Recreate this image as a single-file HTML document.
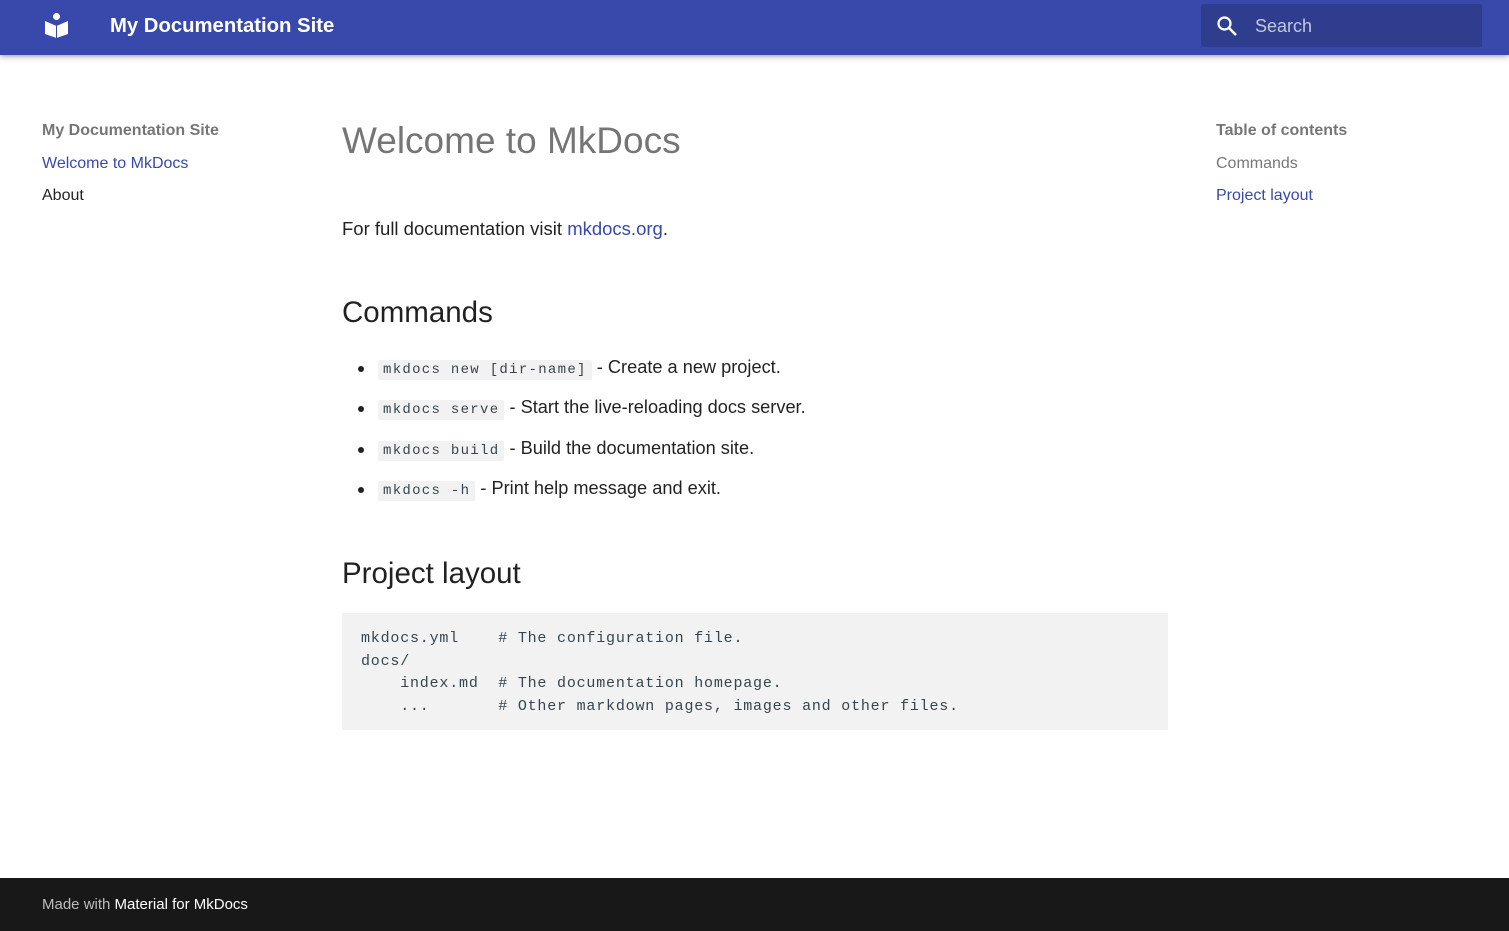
<!DOCTYPE html>
<html><head><meta charset="utf-8"><style>
*{margin:0;padding:0;box-sizing:border-box}
body{width:1509px;height:931px;position:relative;font-family:"Liberation Sans",sans-serif;color:#000000de;background:#fff;overflow:hidden}
.hdr{position:absolute;left:0;top:0;width:1509px;height:55px;background:#3949ab;box-shadow:0 0 4px rgba(0,0,0,.2),0 2px 6px rgba(0,0,0,.25)}
.title{position:absolute;left:110px;top:15px;color:#fff;font-weight:bold;font-size:20.3px}
.search{position:absolute;left:1201px;top:4px;width:281px;height:43px;background:#2f3d8f;border-radius:2px}
.search span{position:absolute;left:54px;top:12px;color:#ffffffb3;font-size:18px}
.nav{position:absolute;font-size:16px}
.code{font-family:"Liberation Mono",monospace;font-size:14px;letter-spacing:1.3px;background:#f2f2f2;padding:2px 5px;color:#36464e;border-radius:2px}
a{color:#3949ab;text-decoration:none}
ul{position:absolute;left:358px;top:357px;list-style:none}
li{height:40.3px;font-size:18.2px;position:relative;padding-left:20px}
li:before{content:"";position:absolute;left:0;top:9px;width:6px;height:6px;border-radius:50%;background:#222}
pre{position:absolute;left:342px;top:613px;width:826px;height:117px;background:#f2f2f2;padding:15px 19px;font-family:"Liberation Mono",monospace;font-size:15px;letter-spacing:0.8px;line-height:22.7px;color:#36464e}
.foot{position:absolute;left:0;top:878px;width:1509px;height:53px;background:#181818;color:#ffffffb3;font-size:15px;padding:18px 42px}
</style></head><body>
<div class="hdr">
<svg style="position:absolute;left:44px;top:12px" width="25" height="26" viewBox="0 0 25 26"><circle cx="12.5" cy="4.5" r="3.5" fill="#fff"/><path d="M1 9 L12.5 14 L24 9 V22 L12.5 26 L1 22Z" fill="#fff"/><path d="M12.5 14 V26" stroke="#3949ab" stroke-width="1"/></svg>
<div class="title">My Documentation Site</div>
<div class="search"><svg style="position:absolute;left:14px;top:10px" width="24" height="24" viewBox="0 0 24 24"><circle cx="9.5" cy="9.5" r="6" fill="none" stroke="#fff" stroke-width="2.2"/><path d="M14 14 L21 21" stroke="#fff" stroke-width="2.6"/></svg><span>Search</span></div>
</div>
<div class="nav" style="left:42px;top:122px;font-weight:bold;color:#0000008a">My Documentation Site</div>
<div class="nav" style="left:42px;top:155px"><a>Welcome to MkDocs</a></div>
<div class="nav" style="left:42px;top:187px">About</div>
<div class="nav" style="left:1216px;top:122px;font-weight:bold;color:#0000008a">Table of contents</div>
<div class="nav" style="left:1216px;top:155px;color:#0000008a">Commands</div>
<div class="nav" style="left:1216px;top:187px"><a>Project layout</a></div>
<div style="position:absolute;left:342px;top:120px;font-size:37px;color:#0000008a;font-weight:300">Welcome to MkDocs</div>
<div style="position:absolute;left:342px;top:218px;font-size:18.5px">For full documentation visit <a>mkdocs.org</a>.</div>
<div style="position:absolute;left:342px;top:296px;font-size:29.5px;font-weight:300">Commands</div>
<ul>
<li><span class="code">mkdocs new [dir-name]</span> - Create a new project.</li>
<li><span class="code">mkdocs serve</span> - Start the live-reloading docs server.</li>
<li><span class="code">mkdocs build</span> - Build the documentation site.</li>
<li><span class="code">mkdocs -h</span> - Print help message and exit.</li>
</ul>
<div style="position:absolute;left:342px;top:557px;font-size:29.5px;font-weight:300">Project layout</div>
<pre>mkdocs.yml    # The configuration file.
docs/
    index.md  # The documentation homepage.
    ...       # Other markdown pages, images and other files.</pre>
<div class="foot">Made with <span style="color:#fff">Material for MkDocs</span></div>
</body></html>
